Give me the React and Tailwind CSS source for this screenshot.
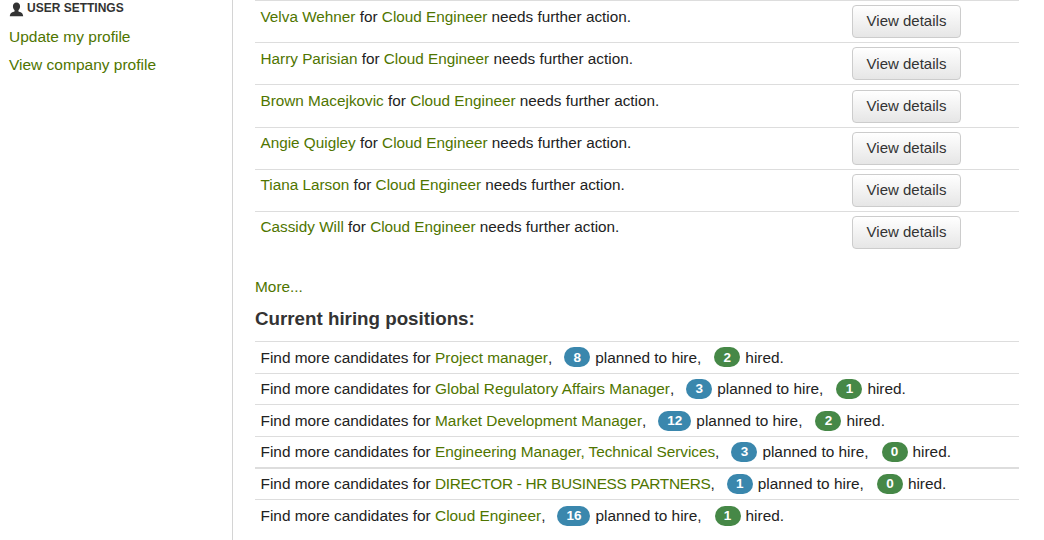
const names = ["Velva Wehner", "Harry Parisian", "Brown Macejkovic", "Angie Quigley", "Tiana Larson", "Cassidy Will"];

const hiring = [
  ["Project manager", "8", "2", ""],
  ["Global Regulatory Affairs Manager", "3", "1", ""],
  ["Market Development Manager", "12", "2", ""],
  ["Engineering Manager, Technical Services", "3", "0", "tracking-[-0.05px]"],
  ["DIRECTOR - HR BUSINESS PARTNERS", "1", "0", "tracking-[-0.3px]"],
  ["Cloud Engineer", "16", "1", ""],
];

function L({ children, className = "" }) {
  return <a className={`text-[#4f7500] ${className}`}>{children}</a>;
}

function Badge({ className, children }) {
  return (
    <span className={`inline-flex h-[20px] min-w-[26px] items-center justify-center rounded-full px-[9px] text-[13.5px] font-bold leading-none text-white ${className}`}>
      {children}
    </span>
  );
}

export default function App() {
  return (
    <div className="flex h-[540px] w-[1044px] overflow-hidden bg-white font-['Liberation_Sans',Arial,sans-serif] text-[15.3px] text-[#222]">
      <aside className="h-full w-[233px] shrink-0 border-r border-[#d4d4d4] pl-[9px]">
        <div className="flex h-[15px] items-center text-[12px] font-bold text-[#333]">
          <svg viewBox="0 0 16 16" className="mr-[3px] mt-[4px] h-[15px] w-[15px] fill-[#333]">
            <path d="M8 .5c2.500 0 3.800 1.800 3.800 4.200 0 1.600-.7 3.100-1.700 3.900v1.500c1.900.6 5 1.300 5 5.200H.9c0-3.900 3.100-4.600 5-5.200V8.600c-1-.8-1.700-2.300-1.700-3.900C4.200 2.300 5.500.5 8 .5z" />
          </svg>
          USER SETTINGS
        </div>
        <div className="mt-[8px] text-[15.5px] leading-[28px]">
          <div><L>Update my profile</L></div>
          <div><L>View company profile</L></div>
        </div>
      </aside>

      <main className="ml-[22px] w-[764px] shrink-0">
        <div className="border-t border-[#ddd]">
          {names.map((n) => (
            <div key={n} className="flex h-[42.2px] items-start justify-between border-b border-[#ddd] pl-[5.500px] last:border-b-0">
              <div className="pt-[6.5px] leading-[17px]">
                <L>{n}</L> for <L>Cloud Engineer</L> needs further action.
              </div>
              <button className="mr-[58px] mt-[4.2px] h-[33px] w-[109px] rounded-[4px] border border-[#ccc] bg-gradient-to-b from-white to-[#e6e6e6] text-[15px] text-[#333]">
                View details
              </button>
            </div>
          ))}
        </div>

        <div className="mt-[23px] text-[15.4px] leading-[20px]"><L>More...</L></div>
        <h3 className="mt-[10px] text-[18.75px] font-bold leading-[24px] text-[#333]">Current hiring positions:</h3>

        <div className="mt-[10px] border-t border-[#ddd] text-[15.4px]">
          {hiring.map(([title, planned, hired, track], i) => (
            <div key={title} className={`flex h-[31.6px] items-center whitespace-pre pl-[5.500px] ${i === 5 ? "" : i === 3 ? "border-b-2 border-[#ddd]" : "border-b border-[#ddd]"}`}>
              Find more candidates for <L className={track}>{title}</L>,
              <Badge className="ml-[12px] mr-[5px] bg-[#3a87ad]">{planned}</Badge>
              planned to hire,
              <Badge className="ml-[13px] mr-[5px] bg-[#468847]">{hired}</Badge>
              hired.
            </div>
          ))}
        </div>
      </main>
    </div>
  );
}
